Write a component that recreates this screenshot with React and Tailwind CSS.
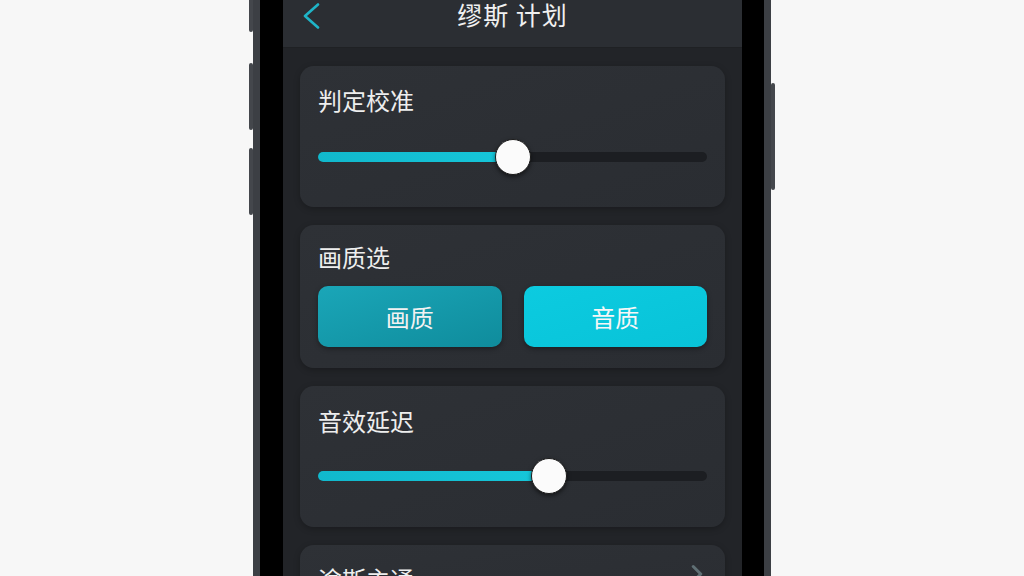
import { ChevronRight } from "lucide-react";

const cjk = { fontFamily: '"Noto Sans CJK SC", "Noto Sans", sans-serif' };

function Slider({ value }) {
  return (
    <div className="relative h-[36px] flex items-center">
      <div className="w-full h-[10px] rounded-full bg-[#1c1e22]">
        <div
          className="h-full rounded-full bg-gradient-to-r from-[#11b8cc] to-[#16c7da]"
          style={{ width: `${value}%` }}
        />
      </div>
      <div
        className="absolute top-0 w-[36px] h-[36px] -ml-[18px] rounded-full bg-[#fbfbfb] border border-[#1a1a1a] shadow-[0_2px_4px_rgba(0,0,0,0.5)]"
        style={{ left: `${value}%` }}
      />
    </div>
  );
}

function Card({ children, className = "" }) {
  return (
    <div
      className={`rounded-[14px] bg-gradient-to-br from-[#2e3136] to-[#2a2d32] px-[18px] shadow-[0_2px_6px_rgba(0,0,0,0.25)] ${className}`}
    >
      {children}
    </div>
  );
}

export default function App() {
  return (
    <div className="w-[1024px] h-[576px] overflow-hidden bg-[#f7f7f7] flex justify-center" style={cjk}>
      {/* left side keys */}
      <div className="w-[4px] flex flex-col">
        <div className="h-[32px] rounded-b-sm bg-[#44474c]" />
        <div className="mt-[31px] h-[67px] rounded-sm bg-[#44474c]" />
        <div className="mt-[18px] h-[67px] rounded-sm bg-[#44474c]" />
      </div>

      {/* body */}
      <div className="h-[700px] border-x-[7px] border-[#3c3f44] bg-black pl-[23px] pr-[22px]">
        <div className="w-[459px] h-full bg-[#222428] flex flex-col">
          {/* top bar */}
          <div className="h-[48px] bg-[#2b2e33] border-b border-[#1f2124] relative flex justify-center">
            <svg
              className="absolute left-[20px] top-[3px]"
              width="17"
              height="26"
              viewBox="0 0 17 26"
              fill="none"
              stroke="#1fb4c7"
              strokeWidth="2.6"
              strokeLinecap="round"
              strokeLinejoin="round"
            >
              <polyline points="15,1.5 2,13 15,24.5" />
            </svg>
            <div className="text-[25px] leading-[29px] text-[#f0f0f0] tracking-[1px]">
              缪斯&nbsp;计划
            </div>
          </div>

          <div className="px-[17px] pt-[18px] flex flex-col gap-[18px]">
            <Card className="h-[141px] pt-[18px]">
              <div className="text-[24px] leading-[32px] text-[#eeeeee]">判定校准</div>
              <div className="mt-[23px]">
                <Slider value={50} />
              </div>
            </Card>

            <Card className="h-[143px] pt-[16px]">
              <div className="text-[24px] leading-[32px] text-[#eeeeee]">画质选</div>
              <div className="mt-[13px] flex gap-[22px]">
                <button className="flex-1 h-[61px] rounded-[10px] bg-gradient-to-br from-[#1aa6b8] to-[#0f8c9c] text-[24px] text-[#f2f2f2] shadow-[0_2px_5px_rgba(0,0,0,0.35)]">
                  画质
                </button>
                <button className="flex-1 h-[61px] rounded-[10px] bg-gradient-to-br from-[#0ccbe0] to-[#08c3d8] text-[24px] text-[#f7f7f7] shadow-[0_2px_5px_rgba(0,0,0,0.35)]">
                  音质
                </button>
              </div>
            </Card>

            <Card className="h-[141px] pt-[19px]">
              <div className="text-[24px] leading-[32px] text-[#eeeeee]">音效延迟</div>
              <div className="mt-[21px]">
                <Slider value={59.3} />
              </div>
            </Card>

            <Card className="h-[80px] pt-[18px] flex justify-between items-start">
              <div className="text-[24px] leading-[32px] text-[#eeeeee]">途斯主通</div>
              <ChevronRight className="-mt-[4px] -mr-[5px] text-[#5f6f74]" size={30} strokeWidth={2.4} />
            </Card>
          </div>
        </div>
      </div>

      {/* right side key */}
      <div className="w-[4px] flex flex-col">
        <div className="mt-[83px] h-[107px] rounded-sm bg-[#44474c]" />
      </div>
    </div>
  );
}
